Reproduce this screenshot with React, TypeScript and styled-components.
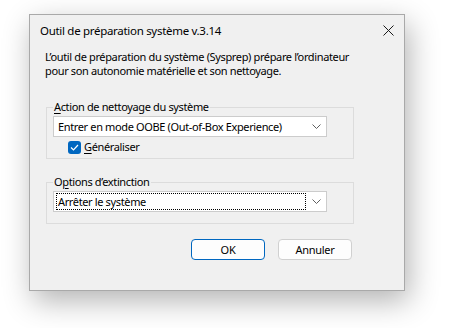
import React from 'react';
import styled, { createGlobalStyle } from 'styled-components';

const GlobalStyle = createGlobalStyle`
  body {
    margin: 0;
    background: #ffffff;
    font-family: "Noto Sans", "Open Sans", sans-serif;
    font-size: 11px;
    letter-spacing: -0.36px;
    color: #000000;
  }
`;

const Page = styled.div`
  width: 449px;
  height: 328px;
  padding: 14px 0 0 29px;
  box-sizing: border-box;
  overflow: hidden;
`;

const Dialog = styled.div`
  width: 376px;
  height: 277px;
  box-sizing: border-box;
  background: #f0f0f0;
  border: 1px solid #a9a9a9;
  box-shadow: 4px 10px 28px rgba(0, 0, 0, 0.3);
  display: flex;
  flex-direction: column;
`;

const TitleBar = styled.div`
  height: 30px;
  display: flex;
  align-items: center;
  justify-content: space-between;
  padding: 0 10px 0 10px;
  font-size: 11.5px;
  letter-spacing: -0.3px;
`;

const CloseButton = styled.button`
  width: 12px;
  height: 12px;
  padding: 0;
  border: none;
  background: none;
  display: flex;
  align-items: center;
  justify-content: center;
`;

const Content = styled.div`
  padding: 5px 15px 0 15px;
  display: flex;
  flex-direction: column;
`;

const Description = styled.p`
  margin: 0;
  line-height: 14px;
  white-space: nowrap;
`;

const Group = styled.fieldset<{ $top: number; $bottom: number }>`
  margin: ${(p) => p.$top}px 0 0 1px;
  width: 308px;
  box-sizing: border-box;
  border: 1px solid #dcdcdc;
  padding: 0 6px ${(p) => p.$bottom}px 6px;
  min-width: 0;
`;

const Legend = styled.legend`
  padding: 0 1px;
  line-height: 14px;
`;

const Key = styled.span`
  text-decoration: underline;
  text-underline-offset: 2px;
`;

const Combo = styled.div<{ $gap: number }>`
  margin-top: ${(p) => p.$gap}px;
  width: 274px;
  height: 21px;
  box-sizing: border-box;
  background: #ffffff;
  border: 1px solid #cccccc;
  display: flex;
  align-items: center;
  padding: 0 5px 0 2px;
`;

const ComboText = styled.span<{ $focused?: boolean }>`
  flex: 1;
  height: 15px;
  line-height: 15px;
  padding-left: 1px;
  border: 1px dotted ${(p) => (p.$focused ? '#000000' : 'transparent')};
  white-space: nowrap;
`;

const Chevron = styled.svg`
  margin-left: 6px;
  flex: none;
`;

const CheckRow = styled.label`
  margin: 3px 0 0 15px;
  display: flex;
  align-items: center;
  gap: 3px;
  line-height: 14px;
`;

const Box = styled.span`
  width: 13px;
  height: 13px;
  border-radius: 3px;
  background: #0067c0;
  display: flex;
  align-items: center;
  justify-content: center;
`;

const Buttons = styled.div`
  margin: 15px 0 0 0;
  width: 308px;
  display: flex;
  justify-content: flex-end;
  gap: 13px;
  padding-right: 1px;
  box-sizing: border-box;
`;

const Button = styled.button<{ $primary?: boolean }>`
  width: 74px;
  height: 21px;
  box-sizing: border-box;
  font-family: inherit;
  font-size: 11px;
  letter-spacing: -0.3px;
  color: #000000;
  background: #fdfdfd;
  border: 1px solid ${(p) => (p.$primary ? '#0067c0' : '#d0d0d0')};
  border-radius: 4px;
  padding: 0;
`;

function ChevronIcon() {
  return (
    <Chevron width="9" height="5" viewBox="0 0 9 5">
      <path d="M0.5 0.5 L4.5 4.5 L8.5 0.5" fill="none" stroke="#5f5f5f" strokeWidth="1" />
    </Chevron>
  );
}

export default function App() {
  return (
    <Page>
      <GlobalStyle />
      <Dialog>
        <TitleBar>
          <span>Outil de préparation système v.3.14</span>
          <CloseButton aria-label="Fermer">
            <svg width="11" height="11" viewBox="0 0 11 11">
              <path d="M0.5 0.5 L10.5 10.5 M10.5 0.5 L0.5 10.5" stroke="#1a1a1a" strokeWidth="1" />
            </svg>
          </CloseButton>
        </TitleBar>
        <Content>
          <Description>
            L’outil de préparation du système (Sysprep) prépare l’ordinateur
            <br />
            pour son autonomie matérielle et son nettoyage.
          </Description>
          <Group $top={22} $bottom={4}>
            <Legend>
              <Key>A</Key>ction de nettoyage du système
            </Legend>
            <Combo $gap={2}>
              <ComboText>Entrer en mode OOBE (Out-of-Box Experience)</ComboText>
              <ChevronIcon />
            </Combo>
            <CheckRow>
              <Box>
                <svg width="9" height="7" viewBox="0 0 9 7">
                  <path d="M1 3.5 L3.5 6 L8 1" fill="none" stroke="#ffffff" strokeWidth="1.2" />
                </svg>
              </Box>
              <span>
                <Key>G</Key>énéraliser
              </span>
            </CheckRow>
          </Group>
          <Group $top={16} $bottom={11}>
            <Legend>
              O<Key>p</Key>tions d’extinction
            </Legend>
            <Combo $gap={2}>
              <ComboText $focused>Arrêter le système</ComboText>
              <ChevronIcon />
            </Combo>
          </Group>
          <Buttons>
            <Button $primary>OK</Button>
            <Button>Annuler</Button>
          </Buttons>
        </Content>
      </Dialog>
    </Page>
  );
}
